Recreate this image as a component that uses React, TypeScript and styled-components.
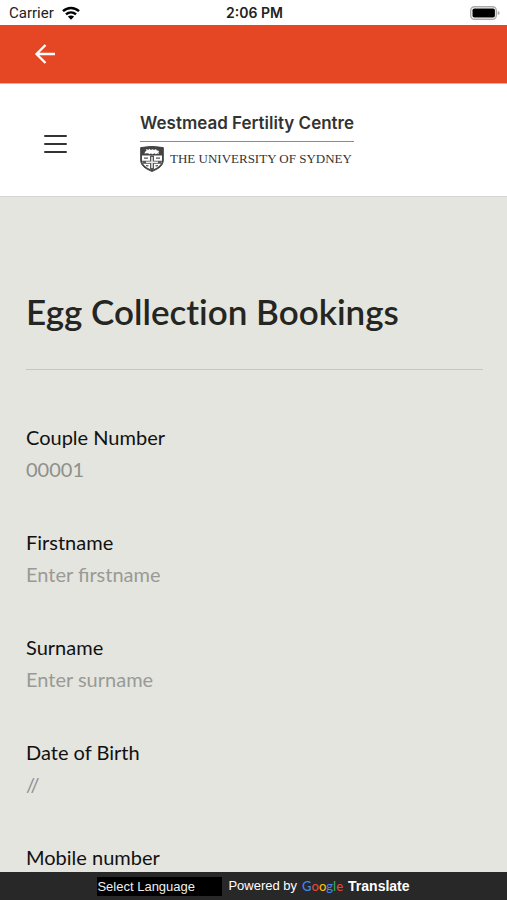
import React from "react";
import styled, { createGlobalStyle } from "styled-components";

const GlobalStyle = createGlobalStyle`
  * { box-sizing: border-box; }
  body { margin: 0; font-family: Lato, "Open Sans", sans-serif; color: #252622; background: #e4e5df; }
`;

const Screen = styled.div`
  height: 100vh;
  display: flex;
  flex-direction: column;
  overflow: hidden;
`;

const StatusBar = styled.div`
  flex: none;
  height: 25px;
  padding: 0 7px 0 9px;
  display: grid;
  grid-template-columns: 1fr auto 1fr;
  align-items: center;
  background: #fff;
  font: 400 15px/24px Roboto, Inter, sans-serif;
  color: #222;
`;

const Carrier = styled.span`
  display: flex;
  align-items: center;
  gap: 8px;
`;

const Clock = styled.span`
  font: 600 14px/26px Inter, sans-serif;
`;

const Battery = styled.svg`
  justify-self: end;
`;

const NavBar = styled.nav`
  flex: none;
  height: 59px;
  padding: 0 32px;
  display: flex;
  align-items: center;
  background: #e54725;
  border-bottom: 1px solid #f4ac9b;
`;

const IconButton = styled.button`
  display: flex;
  padding: 0;
  border: 0;
  background: none;
  color: inherit;
  cursor: pointer;
`;

const Header = styled.header`
  flex: none;
  height: 113px;
  padding: 8px 43px 0;
  display: flex;
  align-items: center;
  gap: 72px;
  background: #fff;
  border-bottom: 1px solid #d6d7d2;
`;

const Brand = styled.a`
  padding-bottom: 4px;
  color: #333;
  text-decoration: none;
`;

const BrandName = styled.div`
  font: 600 17px/22px Inter, sans-serif;
  padding-bottom: 7px;
  border-bottom: 1px solid #8b8b8b;
  white-space: nowrap;
`;

const University = styled.div`
  display: flex;
  align-items: center;
  gap: 6px;
  padding-top: 4px;
  font: 400 13px/26px "Liberation Serif", serif;
  white-space: nowrap;
`;

const Main = styled.main`
  flex: 1;
  min-height: 0;
  overflow-y: auto;
  scrollbar-width: none;
  padding: 90px 24px 24px 26px;
`;

const Title = styled.h1`
  margin: 0 0 30px;
  padding-bottom: 34px;
  border-bottom: 1px solid #c6c7c2;
  font-size: 35px;
  line-height: 48px;
  font-weight: 600;
  font-variant-ligatures: none;
`;

const Form = styled.form`
  padding-top: 23px;
  display: grid;
  gap: 45px;
`;

const Field = styled.div`
  display: grid;
  gap: 4px;
`;

const Label = styled.label`
  font-size: 20px;
  line-height: 28px;
  color: #111;
`;

const Input = styled.input`
  width: 100%;
  height: 28px;
  padding: 0;
  border: 0;
  outline: 0;
  background: none;
  font: inherit;
  font-size: 20px;
  line-height: 28px;
  color: #8f908b;
  &::placeholder { color: #999a95; opacity: 1; }
`;

const TranslateBar = styled.footer`
  flex: none;
  height: 28px;
  display: flex;
  align-items: center;
  justify-content: center;
  gap: 6px;
  background: #282828;
  color: #fff;
  font: 400 13px/20px "Liberation Sans", Arial, sans-serif;
`;

const LanguageSelect = styled.select`
  appearance: none;
  width: 125px;
  height: 19px;
  padding: 0;
  border: 0;
  border-radius: 0;
  background: #000;
  color: #eee;
  font: inherit;
`;

const Credit = styled.span`
  display: flex;
  gap: 5px;
  white-space: nowrap;
`;

const Google = styled.span`
  font-family: Lato, sans-serif;
  font-weight: 500;
`;

const Letter = styled.span<{ $color: string }>`
  color: ${(p) => p.$color};
`;

const Product = styled.strong`
  font-size: 14px;
`;

const googleLetters: [string, string][] = [
  ["G", "#4285f4"],
  ["o", "#ea4335"],
  ["o", "#fbbc05"],
  ["g", "#4285f4"],
  ["l", "#34a853"],
  ["e", "#ea4335"],
];

const fields = [
  { id: "couple", label: "Couple Number", value: "00001" },
  { id: "firstname", label: "Firstname", placeholder: "Enter firstname" },
  { id: "surname", label: "Surname", placeholder: "Enter surname" },
  { id: "birth", label: "Date of Birth", value: "//" },
  { id: "mobile", label: "Mobile number", placeholder: "Enter mobile number" },
];

const Wifi = () => (
  <svg width="18" height="14" viewBox="0 0 18 14" aria-label="Wi-Fi">
    <g fill="none" stroke="#000" strokeWidth="2.5">
      <path d="M1 5.2C5.6.8 12.4.8 17 5.2" />
      <path d="M4 8.4c2.9-2.7 7.1-2.7 10 0" />
    </g>
    <path d="M5.9 10.6c1.8-1.6 4.4-1.6 6.2 0L9 13.8z" />
  </svg>
);

const Shield = () => (
  <svg width="24" height="26" viewBox="0 0 24 26" aria-hidden="true">
    <path d="M.7 1.6Q12-.8 23.3 1.6V14c0 5.7-4.6 8.8-11.3 11.4C5.3 22.8.7 19.7.7 14z" fill="#444" stroke="#444" />
    <path d="M2 9.500h20v4.500c0 4.700-4 7.500-10 10C6 21.500 2 18.700 2 14z" fill="#fff" />
    <path d="M10 9.500h4v5.300h8l-1 3h-7v5.600l-2 .8-2-.8v-5.600H3l-1-3h8z" fill="#555" />
    <path d="M11.200 11h1.600v4.500h5.200v1.500h-5.200v5h-1.600v-5H6v-1.500h5.200z" fill="#e8e8e8" />
    <path d="M4.500 7.600c.2-1.500.8-2.400 2-2.900L5.700 3.200l2.700.6 1.400-1 .8 1.200 2.200-.8 1.300.9 2-1.200.4 1.400 2.800.6-1 1.200.8 1.700-2-.4-1.400.9-1.300-1-1.700.9-1.800-.8-1.800.8-.7-.9z" fill="#fff" />
    <g fill="none" stroke="#555" strokeWidth="1.200">
      <path d="M4 12.200h4M16 12.200h4M6 19.600l2.500.2M15.500 19.800l2.500-.2" />
    </g>
  </svg>
);

export default function App() {
  return (
    <>
      <GlobalStyle />
      <Screen>
        <StatusBar>
          <Carrier>Carrier <Wifi /></Carrier>
          <Clock>2:06 PM</Clock>
          <Battery width="30" height="14" viewBox="0 0 30 14" aria-label="Battery full">
            <rect x=".7" y=".7" width="25.600" height="12.600" rx="3.800" fill="#fff" stroke="#aaa" strokeWidth="1.400" />
            <rect x="2.500" y="2.500" width="22.400" height="9" rx="1.800" />
            <path d="M27.700 5q2 .5 2 2t-2 2z" fill="#aaa" />
          </Battery>
        </StatusBar>
        <NavBar>
          <IconButton aria-label="Back">
            <svg width="26" height="24" viewBox="0 0 26 24" fill="none" stroke="#fff" strokeWidth="2.300">
              <path d="M23 12H5M13.500 3L4.500 12l9 9" />
            </svg>
          </IconButton>
        </NavBar>
        <Header>
          <IconButton aria-label="Menu">
            <svg width="25" height="20" viewBox="0 0 25 20" stroke="#333" strokeWidth="2" strokeLinecap="round">
              <path d="M2 2h21M2 10h21M2 18h21" />
            </svg>
          </IconButton>
          <Brand href="#">
            <BrandName>Westmead Fertility Centre</BrandName>
            <University><Shield />THE UNIVERSITY OF SYDNEY</University>
          </Brand>
        </Header>
        <Main>
          <Title>Egg Collection Bookings</Title>
          <Form>
            {fields.map((f) => (
              <Field key={f.id}>
                <Label htmlFor={f.id}>{f.label}</Label>
                <Input id={f.id} defaultValue={f.value} placeholder={f.placeholder} />
              </Field>
            ))}
          </Form>
        </Main>
        <TranslateBar>
          <LanguageSelect aria-label="Select Language">
            <option>Select Language</option>
          </LanguageSelect>
          <Credit>
            <span>Powered by</span>
            <Google>
              {googleLetters.map(([c, color], i) => (
                <Letter key={i} $color={color}>{c}</Letter>
              ))}
            </Google>
            <Product>Translate</Product>
          </Credit>
        </TranslateBar>
      </Screen>
    </>
  );
}
